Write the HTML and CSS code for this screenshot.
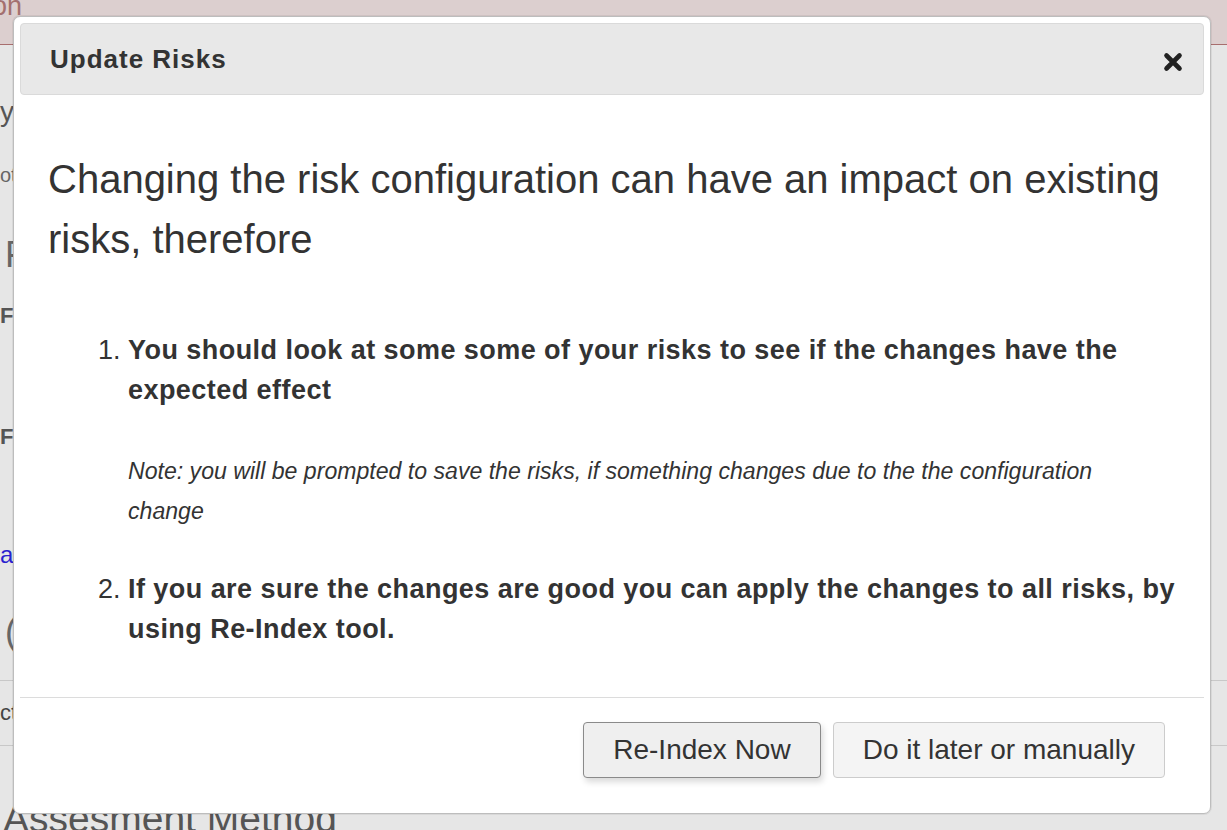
FILE: index.html
```html
<!DOCTYPE html>
<html lang="en">
<head>
<meta charset="utf-8">
<title>Update Risks</title>
<link rel="stylesheet" href="styles.css">
</head>
<body>
<div class="page">
  <div class="topbar">
    <div class="topbar-text">Configuration</div>
  </div>
  <div class="content">
    <div class="frag frag-y">y</div>
    <div class="frag frag-ot">ot</div>
    <div class="frag frag-h">F</div>
    <div class="frag frag-b1">F</div>
    <div class="frag frag-b2">F</div>
    <div class="frag frag-link">a</div>
    <div class="frag frag-paren">(</div>
    <div class="table-row"><span class="frag-ct">ct</span></div>
    <div class="frag frag-method">Assesment Method</div>
  </div>
</div>

<div class="modal">
  <div class="modal-header">
    <h4 class="modal-title">Update Risks</h4>
    <button class="close" aria-label="Close">
      <svg width="20" height="20" viewBox="0 0 20 20"><path d="M3.5 3.5 L16.5 16.5 M16.5 3.5 L3.5 16.5" stroke="#222" stroke-width="4.6" stroke-linecap="round"/></svg>
    </button>
  </div>
  <div class="modal-body">
    <p class="lead">Changing the risk configuration can have an impact on existing risks, therefore</p>
    <ol class="steps">
      <li>
        <div class="step-text">You should look at some some of your risks to see if the changes have the expected effect</div>
        <div class="note">Note: you will be prompted to save the risks, if something changes due to the the configuration change</div>
      </li>
      <li class="step-two">
        <div class="step-text">If you are sure the changes are good you can apply the changes to all risks, by using Re-Index tool.</div>
      </li>
    </ol>
  </div>
  <div class="modal-footer">
    <button class="btn btn-primary">Re-Index Now</button>
    <button class="btn btn-default">Do it later or manually</button>
  </div>
</div>
</body>
</html>
```

FILE: styles.css
```css
html, body {
  margin: 0;
  padding: 0;
}
body {
  width: 1227px;
  height: 830px;
  overflow: hidden;
  background: #e6e6e6;
  font-family: "Liberation Sans", Arial, sans-serif;
  color: #333;
  position: relative;
}

/* background page */
.topbar {
  height: 44px;
  background: #dccfcf;
  border-bottom: 1px solid #a86e6e;
  overflow: hidden;
}
.topbar-text {
  width: 22px;
  display: flex;
  justify-content: flex-end;
  white-space: nowrap;
  font-size: 27px;
  line-height: 27px;
  margin-top: -7px;
  color: #a4706f;
}
.content {
  display: flex;
  flex-direction: column;
}
.frag {
  white-space: nowrap;
  color: #555;
}
.frag-y { font-size: 28px; line-height: 30px; margin-top: 52px; }
.frag-ot { font-size: 20px; line-height: 24px; margin-top: 36px; color: #666; }
.frag-h { font-size: 36px; line-height: 40px; margin-top: 48px; padding-left: 5px; color: #666; }
.frag-b1 { font-size: 22px; line-height: 26px; margin-top: 28px; font-weight: bold; }
.frag-b2 { font-size: 22px; line-height: 26px; margin-top: 95px; font-weight: bold; }
.frag-link { font-size: 24px; line-height: 28px; margin-top: 91px; color: #2a1fcf; }
.frag-paren { font-size: 36px; line-height: 40px; margin-top: 43px; padding-left: 5px; color: #666; }
.table-row {
  margin-top: 28px;
  height: 64px;
  border-top: 1px solid #c8c8c8;
  border-bottom: 1px solid #c8c8c8;
  font-size: 22px;
  line-height: 64px;
  color: #444;
}
.frag-method { font-size: 39px; line-height: 40px; margin-top: 53px; padding-left: 3px; }

/* modal */
.modal {
  position: absolute;
  left: 13px;
  top: 16px;
  width: 1184px;
  padding: 6px;
  background: #fff;
  border: 1px solid #bdbdbd;
  border-radius: 7px;
  box-shadow: 0 0 0 1px rgba(0,0,0,0.06);
}
.modal-header {
  height: 70px;
  background: #e8e8e8;
  border: 1px solid #dadada;
  border-radius: 4px;
  display: flex;
  align-items: center;
  justify-content: space-between;
  padding: 0 20px 0 29px;
}
.modal-title {
  margin: 0;
  font-size: 26px;
  letter-spacing: 1px;
  font-weight: bold;
  color: #333;
}
.close {
  border: 0;
  background: transparent;
  padding: 0;
  margin-top: 6px;
  width: 20px;
  height: 20px;
  display: flex;
}
.modal-body {
  padding: 54px 22px 48px 28px;
}
.lead {
  margin: 0;
  font-size: 40px;
  line-height: 60px;
  color: #333;
}
.steps {
  margin: 61px 0 0 0;
  padding-left: 80px;
}
.steps li {
  font-size: 27px;
  line-height: 40px;
  color: #333;
}
.step-text {
  font-weight: bold;
  letter-spacing: 0.45px;
}
.note {
  margin-top: 41px;
  padding-right: 14px;
  font-size: 23.1px;
  line-height: 40px;
  font-style: italic;
  font-weight: normal;
  color: #333;
}
.step-two {
  margin-top: 38px;
}
.modal-footer {
  border-top: 1px solid #dcdcdc;
  padding: 24px 39px 29px 0;
  display: flex;
  justify-content: flex-end;
  gap: 12px;
}
.btn {
  height: 56px;
  padding: 0 29px;
  font-family: "Liberation Sans", Arial, sans-serif;
  font-size: 28px;
  color: #333;
  border-radius: 4px;
  cursor: pointer;
}
.btn-primary {
  background: #efefef;
  border: 1px solid #8a8a8a;
  box-shadow: 2px 4px 6px rgba(0,0,0,0.15);
}
.btn-default {
  background: #f4f4f4;
  border: 1px solid #cccccc;
}
```
